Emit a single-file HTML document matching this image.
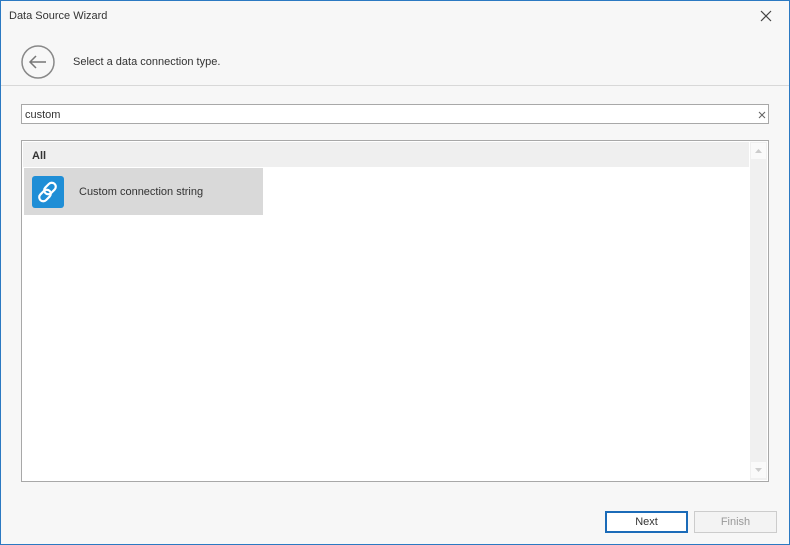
<!DOCTYPE html><html><head><style>
body{margin:0;width:790px;height:545px;overflow:hidden;font-family:"Liberation Sans",sans-serif;font-size:11px;color:#333}
.win{position:absolute;left:0;top:0;width:788px;height:543px;border:1px solid #2b79c2;background:#f7f7f7}
.a{position:absolute}
</style></head><body><div class="win">
<div class="a" style="left:8px;top:9px;font-size:11px;color:#333">Data Source Wizard</div>
<svg class="a" style="left:759px;top:9px" width="12" height="12"><path d="M1 1L11 11M11 1L1 11" stroke="#444" stroke-width="1.2"/></svg>
<svg class="a" style="left:19px;top:43px" width="36" height="36"><circle cx="18" cy="18" r="16" fill="none" stroke="#888" stroke-width="1.5"/><path d="M10 18H26M16 12L10 18L16 24" fill="none" stroke="#777" stroke-width="1.5"/></svg>
<div class="a" style="left:72px;top:55px">Select a data connection type.</div>
<div class="a" style="left:0;top:84px;width:788px;height:1px;background:#d8d8d8"></div>
<div class="a" style="left:20px;top:103px;width:746px;height:18px;border:1px solid #a8a8a8;background:#fff"><span style="position:absolute;left:3px;top:4px">custom</span>
<svg class="a" style="left:736px;top:6px" width="8" height="8"><path d="M1 1L7 7M7 1L1 7" stroke="#666" stroke-width="1.1"/></svg></div>
<div class="a" style="left:20px;top:139px;width:746px;height:340px;border:1px solid #a8a8a8;background:#fff">
<div class="a" style="left:1px;top:1px;width:726px;height:25px;background:#efefef"><b style="position:absolute;left:9px;top:8px;font-size:11px">All</b></div>
<div class="a" style="left:2px;top:27px;width:239px;height:47px;background:#d9d9d9"></div>
<div class="a" style="left:10px;top:35px;width:32px;height:32px;border-radius:3px;background:#1f8ed6"></div>
<svg class="a" style="left:10px;top:35px" width="32" height="32"><g fill="none" stroke="#fff" stroke-width="2.2"><rect x="14" y="6" width="8" height="13" rx="4" transform="rotate(45 18 12.5)"/><rect x="9" y="13" width="8" height="13" rx="4" transform="rotate(45 13 19.5)"/></g></svg>
<div class="a" style="left:57px;top:45px">Custom connection string</div>
<div class="a" style="left:728px;top:1px;width:17px;height:338px;background:#f0f0f0"></div>
<div class="a" style="left:729px;top:2px;width:15px;height:16px;background:#fafafa"><svg width="15" height="16"><path d="M4 10L7.5 6L11 10Z" fill="#ccc"/></svg></div>
<div class="a" style="left:729px;top:321px;width:15px;height:16px;background:#fafafa"><svg width="15" height="16"><path d="M4 6L7.5 10L11 6Z" fill="#ccc"/></svg></div>
</div>
<div class="a" style="left:604px;top:510px;width:79px;height:18px;border:2px solid #1b6bb8;background:#fff;text-align:center;line-height:18px">Next</div>
<div class="a" style="left:693px;top:510px;width:81px;height:20px;border:1px solid #ccc;background:#f3f3f3;text-align:center;line-height:20px;color:#999">Finish</div>
</div></body></html>
